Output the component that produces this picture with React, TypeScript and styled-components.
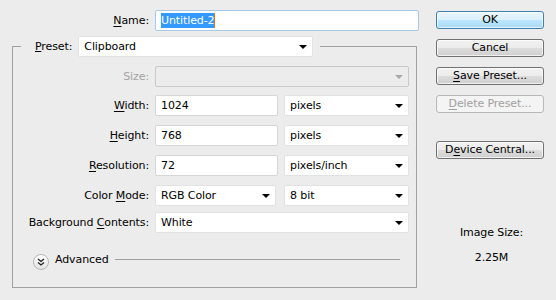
import styled, { createGlobalStyle } from "styled-components";

const GlobalStyle = createGlobalStyle`
   html, body {
      margin: 0;
      padding: 0;
      background: #ececec;
   }
   body {
      font-family: "DejaVu Sans", "Liberation Sans", sans-serif;
      font-size: 11px;
      letter-spacing: -0.1px;
      color: #000;
   }
`;

const Page = styled.div`
   width: 556px;
   height: 300px;
   display: flex;
   background: #ececec;
   overflow: hidden;
`;

const MainColumn = styled.div`
   width: 436px;
   padding: 10px 0 0 12px;
   box-sizing: border-box;
`;

const SideColumn = styled.div`
   width: 108px;
   padding-top: 11px;
   display: flex;
   flex-direction: column;
   align-items: stretch;
`;

const Row = styled.div<{ $top?: number }>`
   display: flex;
   align-items: center;
   gap: 6px;
   margin-top: ${(p) => p.$top ?? 0}px;
`;

const Label = styled.label<{ $disabled?: boolean }>`
   width: 137px;
   text-align: right;
   white-space: nowrap;
   color: ${(p) => (p.$disabled ? "#a3a3a3" : "#000")};
   flex-shrink: 0;

   u {
      text-decoration: underline;
      text-underline-offset: 2px;
   }
`;

const TextBox = styled.div<{ $w: number; $focus?: boolean }>`
   width: ${(p) => p.$w}px;
   height: 21px;
   box-sizing: border-box;
   border: 1px solid ${(p) => (p.$focus ? "#a9c9e6" : "#d6d6d6")};
   border-radius: 2px;
   background: #fff;
   display: flex;
   align-items: center;
   padding: 0 5px;
   white-space: nowrap;
`;

const Selected = styled.span`
   background: #3399ff;
   color: #fff;
   padding: 1px 0;
   border-right: 1px solid #d07a1e;
`;

const SelectBox = styled.div<{ $w: number; $disabled?: boolean }>`
   width: ${(p) => p.$w}px;
   height: 21px;
   box-sizing: border-box;
   border: 1px solid ${(p) => (p.$disabled ? "#c9c9c9" : "#e2e2e2")};
   border-radius: 2px;
   background: ${(p) => (p.$disabled ? "#ececec" : "#fff")};
   display: flex;
   align-items: center;
   justify-content: space-between;
   padding: 0 5px;
   white-space: nowrap;
`;

const Arrow = styled.span<{ $disabled?: boolean }>`
   width: 0;
   height: 0;
   border-left: 4px solid transparent;
   border-right: 4px solid transparent;
   border-top: 4px solid ${(p) => (p.$disabled ? "#a8a8a8" : "#000")};
   margin-top: 1px;
`;

const Group = styled.fieldset`
   margin: 5px 0 0 0;
   padding: 0;
   width: 405px;
   height: 252px;
   box-sizing: border-box;
   border: 1px solid #a0a0a0;
   border-radius: 0;
`;

const Legend = styled.legend`
   padding: 0 7px 0 14px;
   margin-left: 8px;
   display: flex;
   align-items: center;
   gap: 6px;
   height: 21px;
`;

const GroupBody = styled.div`
   padding-top: 9px;
   margin-left: -1px;
`;

const AdvancedRow = styled.div`
   display: flex;
   align-items: center;
   margin: 15px 0 0 20px;
   gap: 6px;
`;

const Expander = styled.span`
   width: 14px;
   height: 14px;
   border-radius: 50%;
   border: 1px solid #b5b5b5;
   background: linear-gradient(#ffffff, #e4e4e4);
   display: flex;
   align-items: center;
   justify-content: center;
   margin-top: 6px;
`;

const AdvancedLine = styled.span`
   flex: 1;
   height: 1px;
   background: #a0a0a0;
   margin: 0 16px 0 0;
`;

const Button = styled.button<{ $primary?: boolean; $disabled?: boolean; $top?: number }>`
   height: 18px;
   margin-top: ${(p) => p.$top ?? 0}px;
   border: 1px solid ${(p) => (p.$primary ? "#3c7fb1" : p.$disabled ? "#b8b8b8" : "#707070")};
   border-radius: 3px;
   background: ${(p) =>
      p.$primary
         ? "linear-gradient(#eaf6fd 0%, #d9f0fc 50%, #bee6fd 51%, #a7d9f5 100%)"
         : p.$disabled
         ? "#f4f4f4"
         : "linear-gradient(#f2f2f2 0%, #ebebeb 50%, #dddddd 51%, #cfcfcf 100%)"};
   box-shadow: inset 0 0 0 1px ${(p) => (p.$disabled ? "transparent" : "rgba(255,255,255,0.7)")};
   color: ${(p) => (p.$disabled ? "#a0a0a0" : "#000")};
   font-family: inherit;
   font-size: 11px;
   letter-spacing: -0.1px;
   padding: 0;
   line-height: 14px;

   u {
      text-decoration: underline;
      text-underline-offset: 2px;
   }
`;

const SizeInfo = styled.div`
   margin-top: 67px;
   text-align: center;
   line-height: 14px;
   display: flex;
   flex-direction: column;
   gap: 11px;
   padding-left: 3px;
`;

export default function App() {
   return (
      <>
         <GlobalStyle />
         <Page>
            <MainColumn>
               <Row>
                  <Label>
                     <u>N</u>ame:
                  </Label>
                  <TextBox $w={264} $focus>
                     <Selected>Untitled-2</Selected>
                  </TextBox>
               </Row>
               <Group>
                  <Legend>
                     <span>
                        <u>P</u>reset:
                     </span>
                     <SelectBox $w={235}>
                        Clipboard
                        <Arrow />
                     </SelectBox>
                  </Legend>
                  <GroupBody>
                     <Row>
                        <Label $disabled>Size:</Label>
                        <SelectBox $w={254} $disabled>
                           <span />
                           <Arrow $disabled />
                        </SelectBox>
                     </Row>
                     <Row $top={8}>
                        <Label>
                           <u>W</u>idth:
                        </Label>
                        <TextBox $w={123}>1024</TextBox>
                        <SelectBox $w={125}>
                           pixels
                           <Arrow />
                        </SelectBox>
                     </Row>
                     <Row $top={9}>
                        <Label>
                           <u>H</u>eight:
                        </Label>
                        <TextBox $w={123}>768</TextBox>
                        <SelectBox $w={125}>
                           pixels
                           <Arrow />
                        </SelectBox>
                     </Row>
                     <Row $top={9}>
                        <Label>
                           <u>R</u>esolution:
                        </Label>
                        <TextBox $w={123}>72</TextBox>
                        <SelectBox $w={125}>
                           pixels/inch
                           <Arrow />
                        </SelectBox>
                     </Row>
                     <Row $top={9}>
                        <Label>
                           Color <u>M</u>ode:
                        </Label>
                        <SelectBox $w={121}>
                           RGB Color
                           <Arrow />
                        </SelectBox>
                        <SelectBox $w={125} style={{ marginLeft: 2 }}>
                           8 bit
                           <Arrow />
                        </SelectBox>
                     </Row>
                     <Row $top={6}>
                        <Label>
                           Background <u>C</u>ontents:
                        </Label>
                        <SelectBox $w={254}>
                           White
                           <Arrow />
                        </SelectBox>
                     </Row>
                  </GroupBody>
                  <AdvancedRow>
                     <Expander>
                        <svg width="8" height="8" viewBox="0 0 8 8">
                           <path d="M1 1 L4 3.5 L7 1 M1 4.5 L4 7 L7 4.5" fill="none" stroke="#222" strokeWidth="1.3" />
                        </svg>
                     </Expander>
                     <span>Advanced</span>
                     <AdvancedLine />
                  </AdvancedRow>
               </Group>
            </MainColumn>
            <SideColumn>
               <Button $primary>OK</Button>
               <Button $top={10}>Cancel</Button>
               <Button $top={10}>
                  <u>S</u>ave Preset...
               </Button>
               <Button $top={10} $disabled>
                  <u>D</u>elete Preset...
               </Button>
               <Button $top={28}>
                  D<u>e</u>vice Central...
               </Button>
               <SizeInfo>
                  <span>Image Size:</span>
                  <span>2.25M</span>
               </SizeInfo>
            </SideColumn>
         </Page>
      </>
   );
}
